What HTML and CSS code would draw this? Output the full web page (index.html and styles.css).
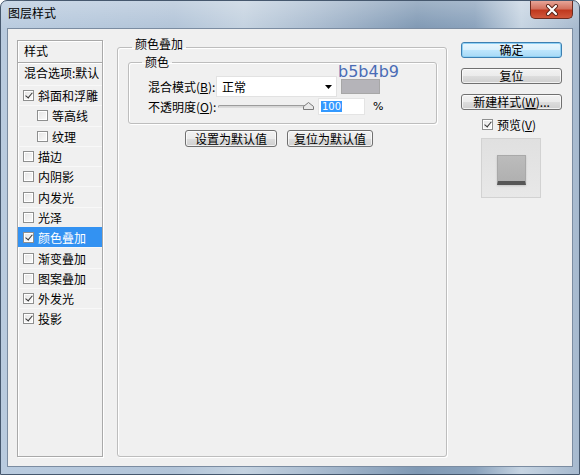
FILE: index.html
```html
<!DOCTYPE html>
<html lang="zh-CN">
<head>
  <meta charset="UTF-8" />
  <title>图层样式</title>
  <link rel="stylesheet" href="styles.css">
</head>
<body>

  <div class="window">
    <div class="titlebar">
      <span class="title">图层样式</span>
      <span class="close">
        <svg width="14" height="12" viewBox="0 0 14 12">
          <path d="M3 2 L11 10 M11 2 L3 10" stroke="#5a2418" stroke-width="4" stroke-linecap="round"/>
          <path d="M3 2 L11 10 M11 2 L3 10" stroke="#fff" stroke-width="2.2" stroke-linecap="round"/>
        </svg>
      </span>
    </div>

    <div class="client">
      <!-- 样式列表 -->
      <div class="style-list">
        <div class="list-head">样式</div>
        <div class="list-blend">混合选项:默认</div>
        <div class="item"><span class="check on"></span>斜面和浮雕</div>
        <div class="item sub"><span class="check"></span>等高线</div>
        <div class="item sub"><span class="check"></span>纹理</div>
        <div class="item"><span class="check"></span>描边</div>
        <div class="item"><span class="check"></span>内阴影</div>
        <div class="item"><span class="check"></span>内发光</div>
        <div class="item"><span class="check"></span>光泽</div>
        <div class="item selected"><span class="check on"></span>颜色叠加</div>
        <div class="item"><span class="check"></span>渐变叠加</div>
        <div class="item"><span class="check"></span>图案叠加</div>
        <div class="item"><span class="check on"></span>外发光</div>
        <div class="item"><span class="check on"></span>投影</div>
      </div>

      <!-- 颜色叠加 -->
      <fieldset class="panel">
        <legend>颜色叠加</legend>
        <fieldset class="group">
          <legend>颜色</legend>
          <div class="row">
            <span class="label">混合模式(<u>B</u>):</span>
            <div class="select">
              <span>正常</span>
              <svg width="7" height="4" viewBox="0 0 7 4"><path d="M0 0 H7 L3.5 4 Z" fill="#000"/></svg>
            </div>
            <div class="swatch"><span class="note">b5b4b9</span></div>
          </div>
          <div class="row row-opacity">
            <span class="label">不透明度(<u>O</u>):</span>
            <div class="slider">
              <svg class="thumb" width="11" height="8" viewBox="0 0 11 8">
                <path d="M0.5 7.5 V4.5 L5.5 0.5 L10.5 4.5 V7.5 Z" fill="#e8e8e8" stroke="#7a7a7a"/>
              </svg>
            </div>
            <div class="num"><span class="sel">100</span></div>
            <span class="pct">%</span>
          </div>
        </fieldset>
        <div class="defaults">
          <button class="btn btn-set">设置为默认值</button>
          <button class="btn btn-reset">复位为默认值</button>
        </div>
      </fieldset>

      <!-- 右侧按钮 -->
      <div class="actions">
        <button class="btn btn-wide primary">确定</button>
        <button class="btn btn-wide">复位</button>
        <button class="btn btn-wide">新建样式(<u>W</u>)...</button>
        <label class="preview-check"><span class="check on"></span><span>预览(<u>V</u>)</span></label>
        <div class="preview">
          <div class="preview-square"></div>
        </div>
      </div>
    </div>
  </div>

</body>
</html>
```

FILE: styles.css
```css
body {
  margin: 0;
  font-family: "Noto Sans CJK SC", "Liberation Sans", sans-serif;
  font-size: 12px;
  color: #000;
  background: #fff;
}

.window {
  width: 580px;
  height: 475px;
  box-sizing: border-box;
  display: flex;
  flex-direction: column;
  border: 1px solid #46586e;
  border-radius: 7px 7px 0 0;
  background:
    linear-gradient(rgba(255,255,255,0.25), rgba(255,255,255,0) 28px),
    linear-gradient(90deg, #b9cbdf 0%, #b2c4d8 30%, #c4d2e0 42%, #a9bbcf 55%, #8099b4 72%, #8aa2bc 82%, #c6d4e2 90%, #a6b9ce 100%);
}

.titlebar {
  height: 27px;
  display: flex;
  justify-content: space-between;
  align-items: flex-start;
}

.title {
  padding: 4px 0 0 7px;
  line-height: 16px;
  color: #000;
}

.close {
  width: 43px;
  height: 18px;
  box-sizing: border-box;
  margin-right: 6px;
  border: 1px solid #6b2b20;
  border-top: none;
  border-radius: 0 0 5px 5px;
  background: linear-gradient(#e7a597, #d3725f 45%, #c0391f 55%, #d0583c);
  display: flex;
  align-items: center;
  justify-content: center;
}

.client {
  flex: 1;
  margin: 0 6px 7px;
  border: 1px solid #7b8ca1;
  background: #f0f0f0;
  display: flex;
  padding: 11px 0 9px 9px;
}

/* 样式列表 */
.style-list {
  width: 86px;
  box-sizing: border-box;
  border: 1px solid #a9a9a9;
  box-shadow: 1px 1px 0 #fff, inset 1px 1px 0 #fff;
  overflow: hidden;
  white-space: nowrap;
}

.list-head {
  height: 21px;
  line-height: 20px;
  padding-left: 6px;
  border-bottom: 1px solid #a9a9a9;
  box-shadow: 0 1px 0 #fff;
}

.list-blend {
  height: 22px;
  line-height: 20px;
  padding-left: 6px;
}

.item {
  height: 20.3px;
  box-sizing: border-box;
  display: flex;
  align-items: center;
  gap: 4px;
  padding-left: 5px;
  border-top: 1px solid #f8f8f8;
}

.item.sub {
  padding-left: 19px;
}

.item.selected {
  background: #3392f2;
  color: #fff;
  border-top-color: #3392f2;
}

.check {
  width: 11px;
  height: 11px;
  box-sizing: border-box;
  border: 1px solid #8e8f8f;
  background: linear-gradient(135deg, #e4e4e4, #fbfbfb);
  box-shadow: inset 0 0 0 1px #fff;
  position: relative;
  flex-shrink: 0;
}

.check.on::after {
  content: "";
  position: absolute;
  left: 3px;
  top: 0;
  width: 3px;
  height: 6px;
  border-right: 1.5px solid #333;
  border-bottom: 1.5px solid #333;
  transform: rotate(40deg);
}

/* 颜色叠加面板 */
fieldset {
  margin: 0;
  min-width: 0;
  box-sizing: border-box;
  border: 1px solid #bdbdbd;
  border-radius: 3px;
  box-shadow: 1px 1px 0 #fff, inset 1px 1px 0 #fff;
}

legend {
  line-height: 14px;
  padding: 0 3px;
}

.panel {
  width: 330px;
  margin: -3px 0 0 14px;
  padding: 0 9px 0 10px;
}

.panel > legend {
  margin-left: 4px;
  padding-bottom: 6px;
}

.group {
  margin-top: -2px;
  padding: 7px 0 8px 19px;
}

.group > legend {
  margin-left: -6px;
}

.row {
  display: flex;
  align-items: center;
  height: 21px;
}

.row-opacity {
  height: 17px;
  margin-top: 1px;
}

.label {
  width: 68px;
  flex-shrink: 0;
}

.row-opacity .label {
  width: 70px;
}

.select {
  width: 121px;
  height: 21px;
  box-sizing: border-box;
  border: 1px solid #e2e2e2;
  background: #fff;
  display: flex;
  align-items: center;
  justify-content: space-between;
  padding: 0 4px 0 5px;
}

.swatch {
  width: 39px;
  height: 15px;
  box-sizing: border-box;
  margin-left: 4px;
  border: 1px solid #a7a7a7;
  background: #b5b4b9;
  position: relative;
}

.note {
  position: absolute;
  left: -4px;
  bottom: 100%;
  font-family: "DejaVu Sans", sans-serif;
  font-size: 16px;
  line-height: 16px;
  color: #4a6cb6;
}

.slider {
  width: 95px;
  height: 3px;
  box-sizing: border-box;
  border: 1px solid #9c9c9c;
  border-bottom-color: #dcdcdc;
  border-radius: 2px;
  background: #d6d6d6;
  position: relative;
}

.thumb {
  position: absolute;
  right: -2px;
  top: -4px;
}

.num {
  width: 47px;
  height: 17px;
  box-sizing: border-box;
  margin-left: 5px;
  background: #fff;
  border: 1px solid #e4e4e4;
  padding: 1px 0 0 2px;
  font-family: "DejaVu Sans", sans-serif;
  font-size: 10px;
  line-height: 13px;
}

.sel {
  background: #3399ff;
  color: #fff;
  padding: 0 1px;
}

.pct {
  margin-left: 8px;
  font-family: "DejaVu Sans", sans-serif;
  font-size: 11px;
}

.defaults {
  display: flex;
  gap: 10px;
  margin-top: 6px;
  padding-left: 57px;
}

/* 按钮 */
.btn {
  height: 17px;
  box-sizing: border-box;
  border: 1px solid #707070;
  border-radius: 3px;
  background: linear-gradient(#f2f2f2 0%, #ebebeb 50%, #dddddd 51%, #cfcfcf 100%);
  box-shadow: inset 0 0 0 1px rgba(255,255,255,0.7);
  font-family: inherit;
  font-size: 12px;
  line-height: 14px;
  padding: 0;
  color: #000;
}

.btn-set {
  width: 92px;
}

.btn-reset {
  width: 86px;
}

.actions {
  width: 101px;
  margin-left: 14px;
  padding-top: 2px;
  display: flex;
  flex-direction: column;
  gap: 10px;
}

.btn-wide {
  width: 101px;
  height: 16px;
}

.btn.primary {
  border-color: #3c7fb1;
  background: linear-gradient(#eaf6fd 0%, #d9f0fc 50%, #bee6fd 51%, #a7d9f5 100%);
  box-shadow: inset 0 0 0 1px #8fd1f5;
}

.preview-check {
  display: flex;
  align-items: center;
  gap: 4px;
  height: 16px;
  margin-top: -4px;
  padding-left: 21px;
}

.preview {
  width: 60px;
  height: 60px;
  box-sizing: border-box;
  margin: -4px 0 0 20px;
  border: 1px solid #d2d2d2;
  background: linear-gradient(#e0e0e0, #e8e8e8);
  padding: 16px 0 0 15px;
}

.preview-square {
  width: 29px;
  height: 30px;
  box-sizing: border-box;
  background: linear-gradient(#bcbcbc, #b0b0b0);
  border: 1px solid #a9a9a9;
  border-bottom: 4px solid #575757;
  box-shadow: 0 1px 2px rgba(0,0,0,0.15);
}
```
